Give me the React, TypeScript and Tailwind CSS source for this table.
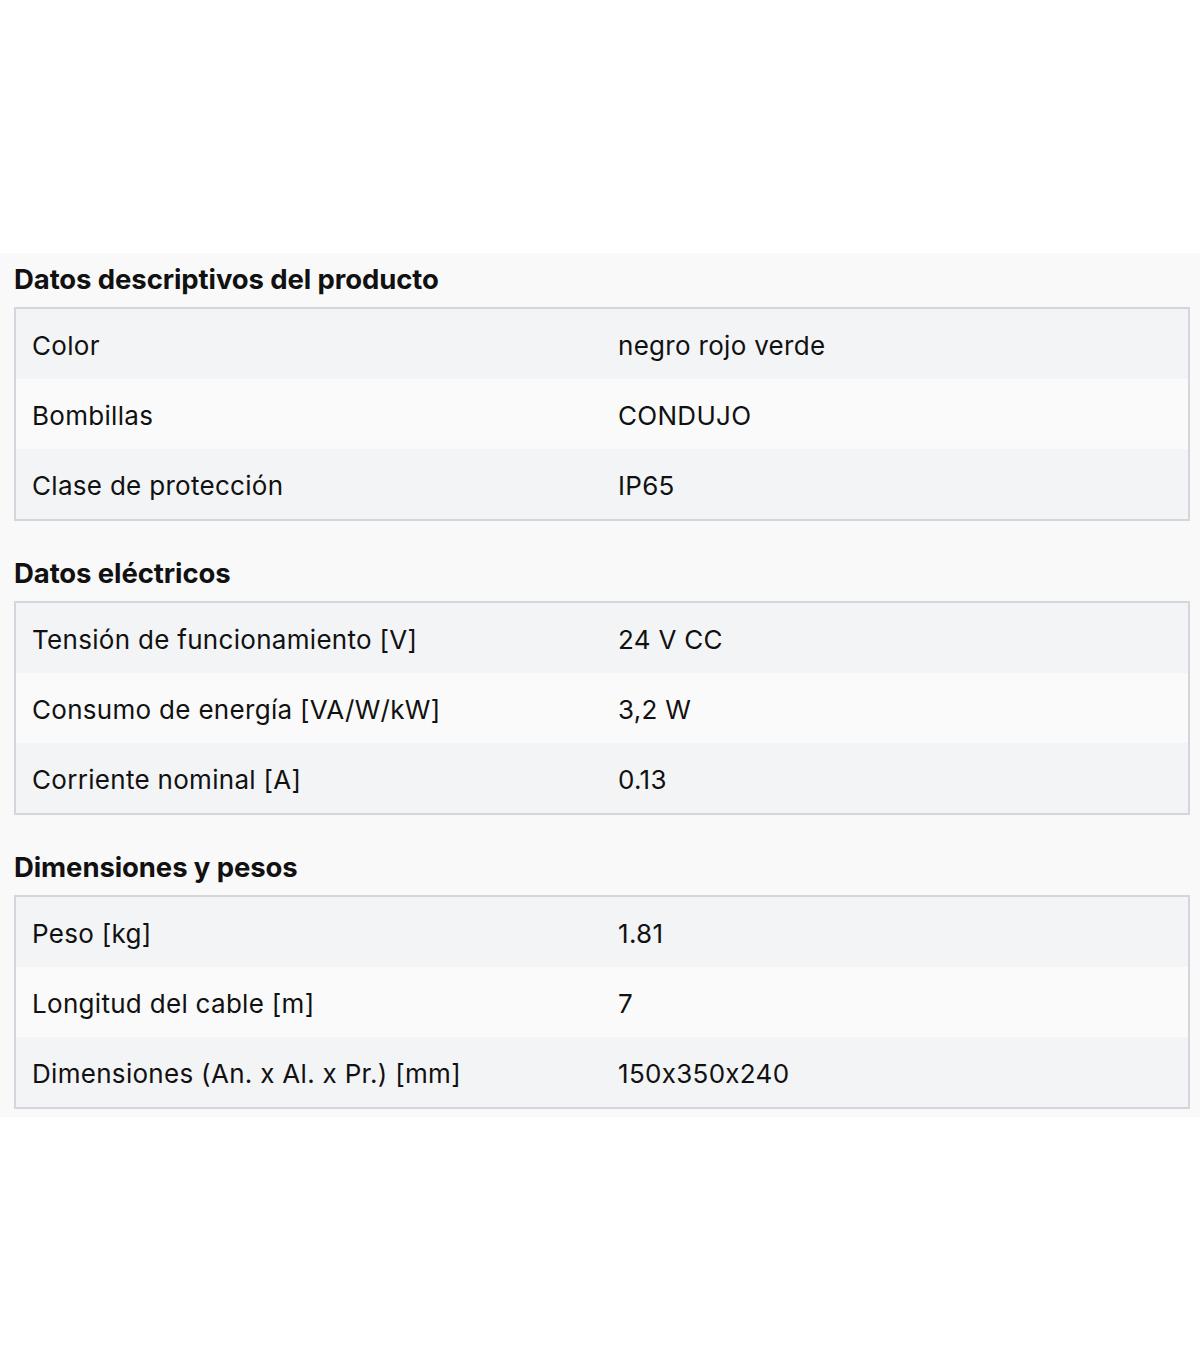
import React from 'react';

type Row = { label: string; value: string };
type Section = { title: string; rows: Row[] };

const sections: Section[] = [
  {
    title: 'Datos descriptivos del producto',
    rows: [
      { label: 'Color', value: 'negro rojo verde' },
      { label: 'Bombillas', value: 'CONDUJO' },
      { label: 'Clase de protección', value: 'IP65' },
    ],
  },
  {
    title: 'Datos eléctricos',
    rows: [
      { label: 'Tensión de funcionamiento [V]', value: '24 V CC' },
      { label: 'Consumo de energía [VA/W/kW]', value: '3,2 W' },
      { label: 'Corriente nominal [A]', value: '0.13' },
    ],
  },
  {
    title: 'Dimensiones y pesos',
    rows: [
      { label: 'Peso [kg]', value: '1.81' },
      { label: 'Longitud del cable [m]', value: '7' },
      { label: 'Dimensiones (An. x Al. x Pr.) [mm]', value: '150x350x240' },
    ],
  },
];

export default function App() {
  return (
    <div className="min-h-[1372px] bg-white pt-[253px] font-['Inter',sans-serif] text-[#111111] [font-feature-settings:'calt'_0]">
      <div className="flex flex-col gap-[26px] bg-[#f9f9f9] px-[14px] pb-[8px] pr-[10px]">
        {sections.map((section) => (
          <section key={section.title}>
            <h2 className="flex h-[54px] items-center text-[27.5px] font-bold tracking-[-0.1px]">
              {section.title}
            </h2>
            <div className="border-2 border-[#d3d6dc]">
              {section.rows.map((row, idx) => (
                <div
                  key={row.label}
                  className={`grid h-[70px] grid-cols-2 items-center pt-[2px] text-[26px] tracking-[0.3px] ${
                    idx % 2 === 0 ? 'bg-[#f3f4f6]' : 'bg-[#fafafa]'
                  }`}
                >
                  <div className="pl-[16px]">{row.label}</div>
                  <div className="pl-[16px]">{row.value}</div>
                </div>
              ))}
            </div>
          </section>
        ))}
      </div>
    </div>
  );
}
